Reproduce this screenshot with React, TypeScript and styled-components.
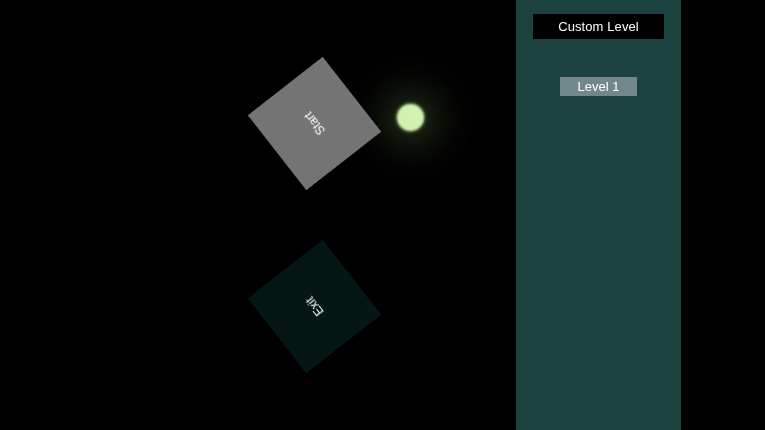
import React from 'react';
import styled, { createGlobalStyle } from 'styled-components';

const GlobalStyle = createGlobalStyle`
  html, body {
    margin: 0;
    padding: 0;
    background: #000000;
  }
`;

const App: React.FC = () => {
  return (
    <Wrapper>
      <GlobalStyle />
      <Board>
        <BallGlow>
          <Ball />
        </BallGlow>
        <Tile $x={314.7} $y={123.5} $color='#747474'>
          <TileLabel>Start</TileLabel>
        </Tile>
        <Tile $x={314.7} $y={306} $color='#051715'>
          <TileLabel>Exit</TileLabel>
        </Tile>
      </Board>
      <SidePanel>
        <CustomButton>
          <ButtonLabel $spacing={0.1}>Custom Level</ButtonLabel>
        </CustomButton>
        <LevelButton>
          <ButtonLabel>Level 1</ButtonLabel>
        </LevelButton>
      </SidePanel>
    </Wrapper>
  );
};

const Wrapper = styled.div`
  display: flex;
  width: 765px;
  height: 430px;
  overflow: hidden;
  background: #000000;
  font-family: 'Liberation Sans', Arial, sans-serif;
`;

const Board = styled.div`
  position: relative;
  width: 516px;
  height: 100%;
`;

const Tile = styled.div<{ $x: number; $y: number; $color: string }>`
  position: absolute;
  left: ${(p) => p.$x - 47.5}px;
  top: ${(p) => p.$y - 47.5}px;
  display: flex;
  align-items: center;
  justify-content: center;
  width: 95px;
  height: 95px;
  background: ${(p) => p.$color};
  transform: rotate(232deg);
  filter: blur(0.5px);
`;

const TileLabel = styled.span`
  color: #ffffff;
  font-size: 12px;
  filter: blur(0.7px);
`;

const BallGlow = styled.div`
  position: absolute;
  left: 345.5px;
  top: 52.5px;
  display: flex;
  align-items: center;
  justify-content: center;
  width: 130px;
  height: 130px;
  background: radial-gradient(
    circle closest-side,
    rgba(100, 145, 75, 0.24) 0%,
    rgba(100, 145, 75, 0.19) 25%,
    rgba(100, 145, 75, 0.07) 55%,
    rgba(100, 145, 75, 0.025) 80%,
    rgba(100, 145, 75, 0) 100%
  );
`;

const Ball = styled.div`
  width: 27px;
  height: 27px;
  border-radius: 50%;
  background: #d1f3af;
  box-shadow: 0 0 3px 1px rgba(170, 215, 130, 0.45);
  filter: blur(0.8px);
`;

const SidePanel = styled.div`
  display: flex;
  flex-direction: column;
  align-items: center;
  width: 165px;
  height: 100%;
  padding-top: 14px;
  box-sizing: border-box;
  background: #1d4340;
`;

const CustomButton = styled.div`
  display: flex;
  align-items: center;
  justify-content: center;
  width: 131px;
  height: 25px;
  margin-bottom: 38px;
  background: #000000;
  filter: blur(0.3px);
`;

const LevelButton = styled.div`
  display: flex;
  align-items: center;
  justify-content: center;
  width: 77px;
  height: 19px;
  background: #70888a;
  filter: blur(0.3px);
`;

const ButtonLabel = styled.span<{ $spacing?: number }>`
  color: #ffffff;
  font-size: 13px;
  letter-spacing: ${(p) => p.$spacing ?? 0}px;
  filter: blur(0.7px);
`;

export default App;
